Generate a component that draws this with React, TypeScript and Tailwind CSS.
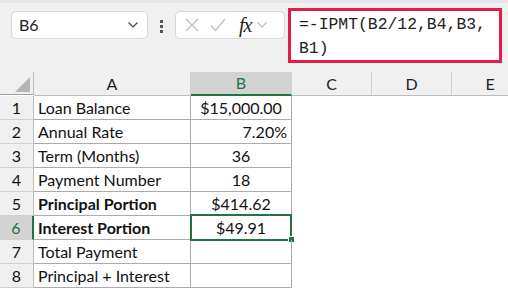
import React from 'react';

const cellFont = { fontFamily: 'Lato, "Open Sans", sans-serif' };

const rows: { label: string; value: string; bold?: boolean; align?: 'center' | 'right' }[] = [
  { label: 'Loan Balance', value: '$15,000.00', align: 'center' },
  { label: 'Annual Rate', value: '7.20%', align: 'right' },
  { label: 'Term (Months)', value: '36', align: 'center' },
  { label: 'Payment Number', value: '18', align: 'center' },
  { label: 'Principal Portion', value: '$414.62', bold: true, align: 'center' },
  { label: 'Interest Portion', value: '$49.91', bold: true, align: 'center' },
  { label: 'Total Payment', value: '' },
  { label: 'Principal + Interest', value: '' },
];

const Toolbar: React.FC = () => (
  <div className="relative h-[72px] bg-[#f0f0f0] border-t-[3px] border-[#e6e6e6]">
    {/* name box */}
    <div className="absolute left-[11px] top-[8px] w-[137px] h-[28px] bg-white border border-[#d6d6d6] rounded-[5px] flex items-center justify-between pl-[7px] pr-[8px]">
      <span className="text-[16px] text-[#222]" style={cellFont}>B6</span>
      <svg width="12" height="8" viewBox="0 0 12 8" fill="none" stroke="#444" strokeWidth="1.2">
        <path d="M1.5 1.5 L6 6 L10.5 1.5" />
      </svg>
    </div>
    {/* dots */}
    <div className="absolute left-[160px] top-[17px] flex flex-col gap-[2px]">
      <div className="w-[3px] h-[3px] bg-[#555]" />
      <div className="w-[3px] h-[3px] bg-[#555]" />
      <div className="w-[3px] h-[3px] bg-[#555]" />
    </div>
    {/* formula buttons */}
    <div className="absolute left-[175px] top-[8px] w-[110px] h-[28px] bg-white border border-[#d6d6d6] rounded-[5px] flex items-center pl-[8px]">
      <svg width="16" height="16" viewBox="0 0 16 16" stroke="#bdbdbd" strokeWidth="1.2" fill="none">
        <path d="M2 2 L14 14 M14 2 L2 14" />
      </svg>
      <svg className="ml-[9px]" width="18" height="16" viewBox="0 0 18 16" stroke="#bdbdbd" strokeWidth="1.2" fill="none">
        <path d="M2 8.5 L6.5 13.5 L16 2" />
      </svg>
      <span
        className="ml-[12px] italic text-[20px] text-[#222] leading-none tracking-[-1px]"
        style={{ fontFamily: '"Liberation Serif", serif' }}
      >
        fx
      </span>
      <svg className="ml-[5px]" width="12" height="8" viewBox="0 0 12 8" fill="none" stroke="#bdbdbd" strokeWidth="1.2">
        <path d="M1.5 1.5 L6 6 L10.5 1.5" />
      </svg>
    </div>
    {/* formula */}
    <div className="absolute left-[288px] top-[5px] w-[214px] h-[55px] bg-white border-[3px] border-[#e11d48] pl-[8px] pt-[2px]">
      <div className="text-[16.4px] leading-[24px] text-[#222]" style={{ fontFamily: '"Liberation Mono", monospace' }}>
        <div>=-IPMT(B2/12,B4,B3,</div>
        <div>B1)</div>
      </div>
    </div>
  </div>
);

const HeaderRow: React.FC = () => (
  <div className="flex h-[24px] text-[16px] text-[#222]" style={cellFont}>
    <div className="relative w-[34px] h-[23px] border-r border-[#bdbdbd] border-b border-b-[#9e9e9e] bg-[#f0f0f0]">
      <svg className="absolute right-[3px] bottom-[2px]" width="15" height="15" viewBox="0 0 15 15">
        <path d="M15 0 L15 15 L0 15 Z" fill="#b4b4b4" />
      </svg>
    </div>
    <div className="w-[157px] border-r border-[#d0d0d0] border-b border-b-[#bdbdbd] bg-[#f0f0f0] flex items-center justify-center">A</div>
    <div className="w-[101px] border-r border-[#d0d0d0] border-b-2 border-b-[#217346] bg-[#d3d3d3] text-[#217346] flex items-center justify-center">B</div>
    <div className="w-[80px] border-r border-[#d0d0d0] border-b border-b-[#bdbdbd] bg-[#f0f0f0] flex items-center justify-center">C</div>
    <div className="w-[80px] border-r border-[#d0d0d0] border-b border-b-[#bdbdbd] bg-[#f0f0f0] flex items-center justify-center">D</div>
    <div className="flex-1 border-b border-b-[#bdbdbd] bg-[#f0f0f0] flex items-center justify-center pl-[20px]">E</div>
  </div>
);

export default function App() {
  return (
    <div className="w-[508px] h-[289px] bg-white overflow-hidden">
      <Toolbar />
      <HeaderRow />
      {rows.map((r, i) => {
        const selected = i === 5;
        return (
          <div key={i} className="flex h-[24px] text-[16px] text-[#111]" style={cellFont}>
            <div
              className={`w-[34px] border-b border-b-[#d0d0d0] flex items-center justify-center ${
                selected ? 'bg-[#d3d3d3] text-[#217346] border-r-2 border-r-[#217346]' : 'bg-[#f0f0f0] border-r border-r-[#bdbdbd]'
              }`}
            >
              {i + 1}
            </div>
            <div className={`w-[157px] border-r border-b border-[#ababab] flex items-center pl-[4px] ${r.bold ? 'font-bold' : ''}`}>
              {r.label}
            </div>
            <div
              className={`relative w-[101px] border-r border-b border-[#ababab] flex items-center ${
                r.align === 'right' ? 'justify-end pr-[4px]' : 'justify-center'
              }`}
            >
              {r.value}
              {selected && (
                <>
                  <div className="absolute -left-[1px] -top-[2px] w-[102px] h-[27px] border-2 border-[#217346]" />
                  <div className="absolute -right-[4px] -bottom-[4px] w-[7px] h-[7px] bg-[#217346] border border-white" />
                </>
              )}
            </div>
            <div className="flex-1" />
          </div>
        );
      })}
    </div>
  );
}
